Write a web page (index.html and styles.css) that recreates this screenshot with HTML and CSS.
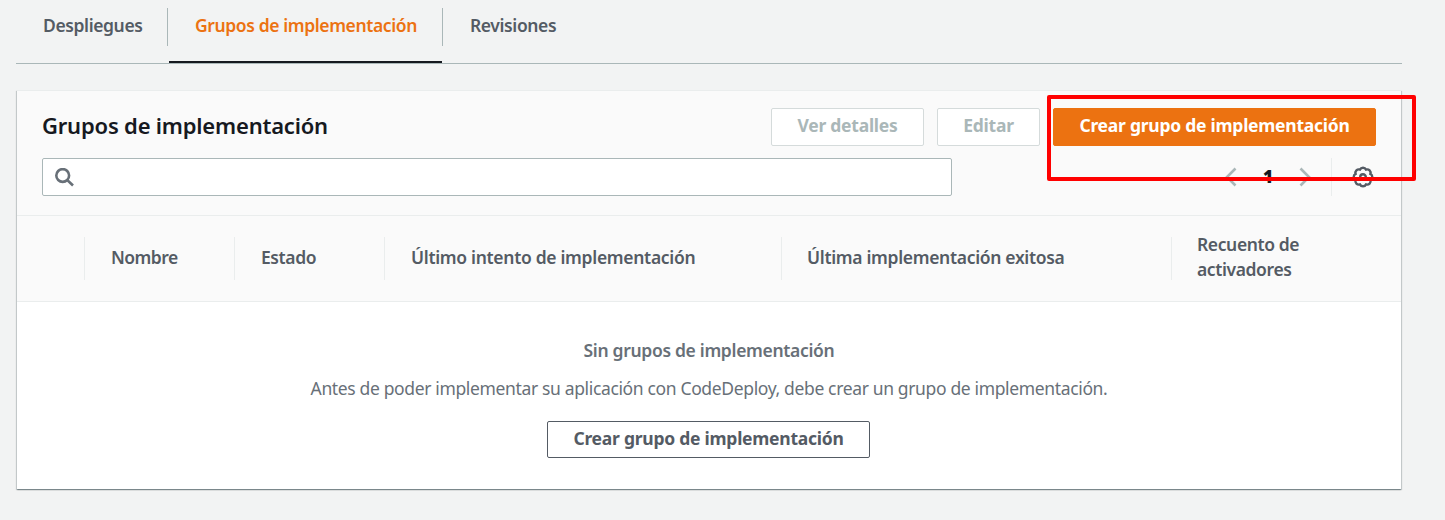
FILE: index.html
```html
<!DOCTYPE html>
<html lang="es">
<head>
<meta charset="utf-8">
<title>Grupos de implementación</title>
<link rel="stylesheet" href="styles.css">
</head>
<body>
<nav class="tabs">
  <a class="tab tab-first">Despliegues</a>
  <a class="tab tab-active">Grupos de implementación</a>
  <a class="tab">Revisiones</a>
</nav>
<main class="card">
  <header class="card-head">
    <div class="row title-row">
      <h1>Grupos de implementación</h1>
      <div class="actions">
        <button class="btn disabled details">Ver detalles</button>
        <button class="btn disabled edit">Editar</button>
        <button class="btn primary">Crear grupo de implementación</button>
      </div>
    </div>
    <div class="row">
      <div class="search">
        <svg width="20" height="20" viewBox="0 0 20 20"><circle cx="7.700" cy="7.500" r="6.400"/><path d="M12.200 12L18 17.500"/></svg>
      </div>
      <div class="pager">
        <svg class="arrow" width="12" height="20" viewBox="0 0 12 20"><path d="M10.500 1.500L2 10l8.500 8.500"/></svg>
        <b>1</b>
        <svg class="arrow" width="12" height="20" viewBox="0 0 12 20"><path d="M1.500 1.500L10 10l-8.500 8.500"/></svg>
        <div class="settings">
          <svg class="gear" width="22" height="22" viewBox="0 0 22 22"><path d="M7.940 3.610A3.400 3.400 0 0 1 14.060 3.610A3.400 3.400 0 0 1 18.390 7.940A3.400 3.400 0 0 1 18.390 14.060A3.400 3.400 0 0 1 14.060 18.390A3.400 3.400 0 0 1 7.940 18.390A3.400 3.400 0 0 1 3.610 14.060A3.400 3.400 0 0 1 3.610 7.940A3.400 3.400 0 0 1 7.940 3.610Z"/><circle cx="11" cy="11" r="2.800"/></svg>
        </div>
      </div>
    </div>
  </header>
  <div class="columns">
    <div class="col pick"></div>
    <div class="col name">Nombre</div>
    <div class="col state">Estado</div>
    <div class="col attempt">Último intento de implementación</div>
    <div class="col success">Última implementación exitosa</div>
    <div class="col count">Recuento de<br>activadores</div>
  </div>
  <section class="empty">
    <strong>Sin grupos de implementación</strong>
    <p>Antes de poder implementar su aplicación con CodeDeploy, debe crear un grupo de implementación.</p>
    <button class="btn normal">Crear grupo de implementación</button>
  </section>
</main>
<div class="highlight"></div>
</body>
</html>
```
FILE: styles.css
```css
* { box-sizing: border-box; }
body { margin: 0; height: 520px; overflow: hidden; padding: 0 43px 0 16px; background: #f2f3f3; color: #545b64; font: 600 17.5px/25px "Noto Sans", sans-serif; font-stretch: 87.5%; letter-spacing: -.39px; }
.tabs { display: flex; height: 64px; border-bottom: 1px solid #aab7b8; }
.tab { height: 38px; margin-top: 8px; padding: 5px 26px 0 27px; white-space: nowrap; }
.tab-first { width: 152px; border-right: 1px solid #aab7b8; }
.tab-active { position: relative; width: 275px; color: #ec7211; border-right: 1px solid #aab7b8; }
.tab-active::after { content: ""; position: absolute; left: 1px; right: 0; top: 53px; height: 2px; background: #16191f; }
.card { margin: 26px 0 0 1px; width: 1384px; height: 399px; background: #fff; box-shadow: 0 1px 1px rgba(0,28,36,.3), 1px 1px 1px rgba(0,28,36,.15), -1px 1px 1px rgba(0,28,36,.15); }
.card-head { height: 126px; background: #fafafa; border-top: 1px solid #eaeded; border-bottom: 1px solid #eaeded; padding: 17px 25px 0; }
.row { display: flex; justify-content: space-between; height: 38px; }
.title-row { margin-bottom: 12px; }
h1 { margin: 0; font-size: 22px; line-height: 34px; font-weight: 600; letter-spacing: -.2px; color: #16191f; white-space: nowrap; }
.actions { display: flex; gap: 13px; }
.btn { height: 38px; padding: 0 0 3px; border: 1px solid #545b64; border-radius: 2px; background: #fff; color: #545b64; font: inherit; font-weight: 700; font-stretch: 87.5%; letter-spacing: -.25px; white-space: nowrap; }
.disabled { border-color: #d5dbdb; color: #aab7b8; }
.details { width: 153px; }
.edit { width: 103px; }
.primary { width: 323px; background: #ec7211; border-color: #ec7211; color: #fff; }
.search { width: 910px; border: 1px solid #aab7b8; border-radius: 2px; background: #fff; padding: 9px 12px; }
.search svg { display: block; fill: none; stroke: #687078; stroke-width: 2.600; }
.pager { display: flex; align-items: center; color: #16191f; }
.pager b { width: 62px; text-align: center; line-height: 36px; padding-bottom: 2px; }
.arrow { fill: none; stroke: #aab7b8; stroke-width: 2.600; }
.settings { height: 38px; border-left: 1px solid #eaeded; margin-left: 20px; padding: 8px 2px 0 20px; }
.gear { display: block; fill: none; stroke: #545b64; stroke-width: 2.400; }
.columns { display: flex; height: 86px; background: #fafafa; border-bottom: 1px solid #eaeded; padding: 21px 0; }
.col { padding-left: 26px; border-left: 1px solid #eaeded; height: 43px; line-height: 41px; white-space: nowrap; }
.pick { width: 67px; border-left: 0; }
.name, .state { width: 150px; }
.name { letter-spacing: -.55px; }
.attempt { width: 397px; letter-spacing: -.31px; }
.success { width: 390px; padding-left: 25px; letter-spacing: -.32px; }
.count { display: flow-root; padding-left: 25px; line-height: 25px; }
.count::before { content: ""; display: block; margin-top: -5px; }
.empty { display: flex; flex-direction: column; align-items: center; padding-top: 36px; color: #687078; }
.empty p { margin: 13px 0 20px; font-weight: 400; letter-spacing: -.355px; white-space: nowrap; }
.empty strong { font-weight: 600; letter-spacing: -.32px; }
.normal { width: 323px; height: 37px; padding-bottom: 2px; margin-right: 1px; }
.highlight { position: absolute; left: 1047px; top: 95px; width: 369px; height: 86px; border: 4px solid #f00; border-radius: 2px; }
```
